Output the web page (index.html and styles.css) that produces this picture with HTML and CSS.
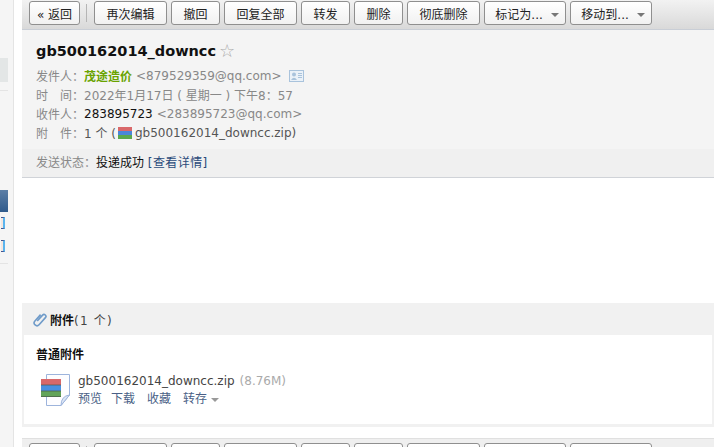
FILE: index.html
```html
<!DOCTYPE html>
<html lang="zh-CN">
<head>
<meta charset="UTF-8">
<meta name="viewport" content="width=device-width, initial-scale=1.0">
<title>gb500162014_downcc</title>
<link rel="stylesheet" href="styles.css">
</head>

<body>

<div class="page">
    <!-- left folder list, cut off by the window -->
    <div class="sidebar">
        <div class="side-hover"></div>
        <div class="side-line"></div>
        <div class="side-active"></div>
        <div class="side-bracket"></div>
        <div class="side-bracket"></div>
        <div class="side-line side-line-low"></div>
    </div>

    <div class="main">
        <div class="toolbar">
            <button class="btn btn-back">« 返回</button>
            <span class="sep"></span>
            <button class="btn btn-4">再次编辑</button>
            <button class="btn btn-2">撤回</button>
            <button class="btn btn-4">回复全部</button>
            <button class="btn btn-2">转发</button>
            <button class="btn btn-2">删除</button>
            <button class="btn btn-4">彻底删除</button>
            <button class="btn btn-menu">标记为... <i class="caret"></i></button>
            <button class="btn btn-menu">移动到... <i class="caret"></i></button>
        </div>

        <div class="mail-head">
            <h2 class="subject">gb500162014_downcc<span class="star">☆</span></h2>
            <div class="row">
                <span class="label">发件人：</span><b class="sender">茂途造价</b>
                <span class="addr">&lt;879529359@qq.com&gt;</span>
                <svg class="card-icon" width="15" height="12" viewBox="0 0 15 12">
                    <rect x="0.5" y="0.5" width="14" height="11" fill="#eaf1f8" stroke="#a9c3dc"/>
                    <circle cx="5" cy="4.5" r="2" fill="#a9c3dc"/>
                    <path d="M2 10 Q5 5.5 8 10 Z" fill="#a9c3dc"/>
                    <path d="M9 3.5h4M9 5.5h4M9 7.5h4" stroke="#a9c3dc"/>
                </svg>
            </div>
            <div class="row"><span class="label">时　间：</span><span class="addr">2022年1月17日 ( 星期一 ) 下午8：57</span></div>
            <div class="row"><span class="label">收件人：</span><span class="dark">283895723</span> <span class="addr">&lt;283895723@qq.com&gt;</span></div>
            <div class="row">
                <span class="label">附　件：</span><span class="mid">1 个 (</span>
                <svg class="zip-small" width="14" height="12" viewBox="0 0 14 12">
                    <rect width="14" height="4" fill="#d9686a"/>
                    <rect y="4" width="14" height="4" fill="#4a86d8"/>
                    <rect y="8" width="14" height="4" fill="#5aa84e"/>
                </svg>
                <span class="mid">gb500162014_downcc.zip)</span>
            </div>
        </div>

        <div class="status">
            <span class="label">发送状态：</span><span class="dark">投递成功</span> <span class="link">[查看详情]</span>
        </div>

        <div class="mail-body"></div>

        <div class="attach">
            <div class="attach-title">
                <svg class="clip" width="14" height="15" viewBox="0 0 14 15">
                    <g transform="rotate(42 7 7.500)">
                        <path d="M4.200 3.500 V12 a2.800 2.800 0 0 0 5.600 0 V2.500 a1.900 1.900 0 0 0 -3.800 0 V10.500" fill="none" stroke="#6f9bc9" stroke-width="1.600"/>
                    </g>
                </svg>
                <b>附件</b><span class="count">(1 个)</span>
            </div>
            <div class="attach-panel">
                <div class="attach-kind">普通附件</div>
                <div class="file">
                    <svg class="file-icon" width="30" height="32" viewBox="0 0 30 32">
                        <path d="M5.500 0.500 H28.500 V21 L20 31.500 H5.500 Z" fill="#fdfdff" stroke="#9db4dc"/>
                        <path d="M20 31.500 Q20 22 28.500 21 Z" fill="#dbe5f5" stroke="#9db4dc"/>
                        <rect x="0" y="5" width="20" height="6" fill="#d9686a"/>
                        <rect x="0" y="11" width="20" height="6" fill="#4a90e0"/>
                        <rect x="0" y="17" width="20" height="6" fill="#62a45a"/>
                        <path d="M0 11h20M0 17h20M0 22.500h20" stroke="#4b5a4b" stroke-width="0.700"/>
                    </svg>
                    <div class="file-info">
                        <div class="file-title"><span class="file-name">gb500162014_downcc.zip</span><span class="file-size">(8.76M)</span></div>
                        <div class="file-links">
                            <span class="file-link">预览</span>
                            <span class="file-link">下载</span>
                            <span class="file-link">收藏</span>
                            <span class="file-link">转存 <i class="caret caret-small"></i></span>
                        </div>
                    </div>
                </div>
            </div>
        </div>

        <div class="toolbar toolbar-bottom">
            <button class="btn btn-back">« 返回</button>
            <span class="sep"></span>
            <button class="btn btn-4">再次编辑</button>
            <button class="btn btn-2">撤回</button>
            <button class="btn btn-4">回复全部</button>
            <button class="btn btn-2">转发</button>
            <button class="btn btn-2">删除</button>
            <button class="btn btn-4">彻底删除</button>
            <button class="btn btn-menu">标记为... <i class="caret"></i></button>
            <button class="btn btn-menu">移动到... <i class="caret"></i></button>
        </div>
    </div>
</div>

</body>
</html>
```

FILE: styles.css
```css
html, body {
    margin: 0;
    height: 100%;
    overflow: hidden;
}

body {
    /* the TC face centres the full-width colon, as in the mail header */
    font-family: "DejaVu Sans", "Noto Sans CJK TC", sans-serif;
    font-size: 12px;
    background-color: #fff;
    color: #333;
}

.page {
    display: flex;
    height: 447px;
    overflow: hidden;
}

/* sidebar */
.sidebar {
    width: 13px;
    flex-shrink: 0;
    background-color: #f5f5f5;
    border-right: 1px solid #e4e4e4;
    margin-right: 8px;
    padding-top: 58px;
}

.side-hover {
    width: 8px;
    height: 24px;
    background-color: #e3e6e6;
}

.side-line {
    width: 8px;
    height: 1px;
    margin-top: 8px;
    background-color: #e4e4e4;
}

.side-line-low {
    margin-top: 0;
}

.side-active {
    width: 8px;
    height: 22px;
    margin-top: 99px;
    background: linear-gradient(#5b7ea6, #2f5a8c);
}

.side-bracket {
    width: 4px;
    height: 12px;
    margin: 5px 0 11px 1px;
    border-right: 2px solid #5ab4ee;
    border-top: 1px solid #44558f;
    border-bottom: 1px solid #44558f;
    box-sizing: border-box;
    background-color: #f3e6e0;
}

/* main column */
.main {
    flex: 1;
    min-width: 0;
}

.toolbar {
    display: flex;
    align-items: flex-start;
    gap: 4px;
    height: 30px;
    padding: 1px 0 0 7px;
    box-sizing: border-box;
    background: linear-gradient(#f2f2f2, #d9d9d9);
    border-bottom: 1px solid #c9ced6;
}

.toolbar-bottom {
    margin-top: 11px;
    padding-top: 4px;
    height: 40px;
    background: #efefef;
    border-top: 1px solid #e0e0e0;
}

.btn {
    height: 24px;
    padding: 0;
    font-family: inherit;
    font-size: 12px;
    color: #222;
    background: linear-gradient(#fff, #f1f1f1);
    border: 1px solid #8f8f8f;
    border-radius: 3px;
    flex-shrink: 0;
}

.btn-back { width: 51px; }
.btn-2 { width: 49px; }
.btn-4 { width: 73px; }
.btn-menu { width: 82px; padding-left: 4px; }

.sep {
    width: 1px;
    height: 18px;
    margin: 3px 3px 0 2px;
    background-color: #b5b5b5;
}

.caret {
    display: inline-block;
    width: 0;
    height: 0;
    margin-left: 4px;
    vertical-align: middle;
    border-left: 4px solid transparent;
    border-right: 4px solid transparent;
    border-top: 4px solid #777;
}

.caret-small {
    margin-left: 0;
    border-top-color: #999;
}

/* mail header */
.mail-head {
    height: 119px;
    padding: 11px 0 0 14px;
    box-sizing: border-box;
    background-color: #f4f4f4;
}

.subject {
    display: flex;
    gap: 3px;
    margin: 0 0 5px 0;
    height: 20px;
    line-height: 20px;
    font-size: 14.5px;
    font-weight: bold;
    color: #111;
}

.star {
    font-weight: normal;
    font-size: 18px;
    color: #aaa;
}

.row {
    display: flex;
    align-items: center;
    gap: 4px;
    height: 19px;
    white-space: pre;
    color: #777;
}

.label {
    color: #888;
    margin-right: -4px;
}

.sender {
    color: #6aa300;
}

.addr {
    color: #888;
}

.dark {
    color: #111;
}

.mid {
    color: #555;
}

.card-icon {
    margin-left: 3px;
}

.zip-small {
    margin: 0 -1px 0 -2px;
}

.status {
    height: 29px;
    line-height: 29px;
    padding-left: 14px;
    box-sizing: border-box;
    background-color: #f0f0f0;
    border-bottom: 1px solid #d0d3d8;
}

.status .label {
    margin-right: 0;
}

.link {
    color: #2a4a7a;
    letter-spacing: 0.4px;
}

.mail-body {
    height: 125px;
}

/* attachments */
.attach {
    background-color: #f1f1f1;
    padding: 0 2px 3px 2px;
}

.attach-title {
    display: flex;
    align-items: center;
    height: 32px;
    padding-left: 9px;
    color: #111;
}

.attach-title b {
    margin-left: 3px;
}

.count {
    color: #444;
    letter-spacing: 1.2px;
}

.attach-panel {
    height: 89px;
    padding: 11px 0 0 12px;
    box-sizing: border-box;
    background-color: #fff;
}

.attach-kind {
    font-weight: bold;
    color: #111;
    height: 18px;
    line-height: 18px;
}

.file {
    display: flex;
    gap: 7px;
    margin-top: 8px;
    padding-left: 5px;
}

.file-icon {
    margin-top: 2px;
    flex-shrink: 0;
}

.file-info {
    line-height: 18px;
    color: #444;
}

.file-title {
    display: flex;
    gap: 5px;
}

.file-name {
    color: #444;
}

.file-size {
    color: #aaa;
}

.file-links {
    display: flex;
    gap: 12px;
}

.file-links .file-link:first-child {
    margin-right: -3px;
}

.file-link {
    color: #4a5f86;
    white-space: pre;
}
```
